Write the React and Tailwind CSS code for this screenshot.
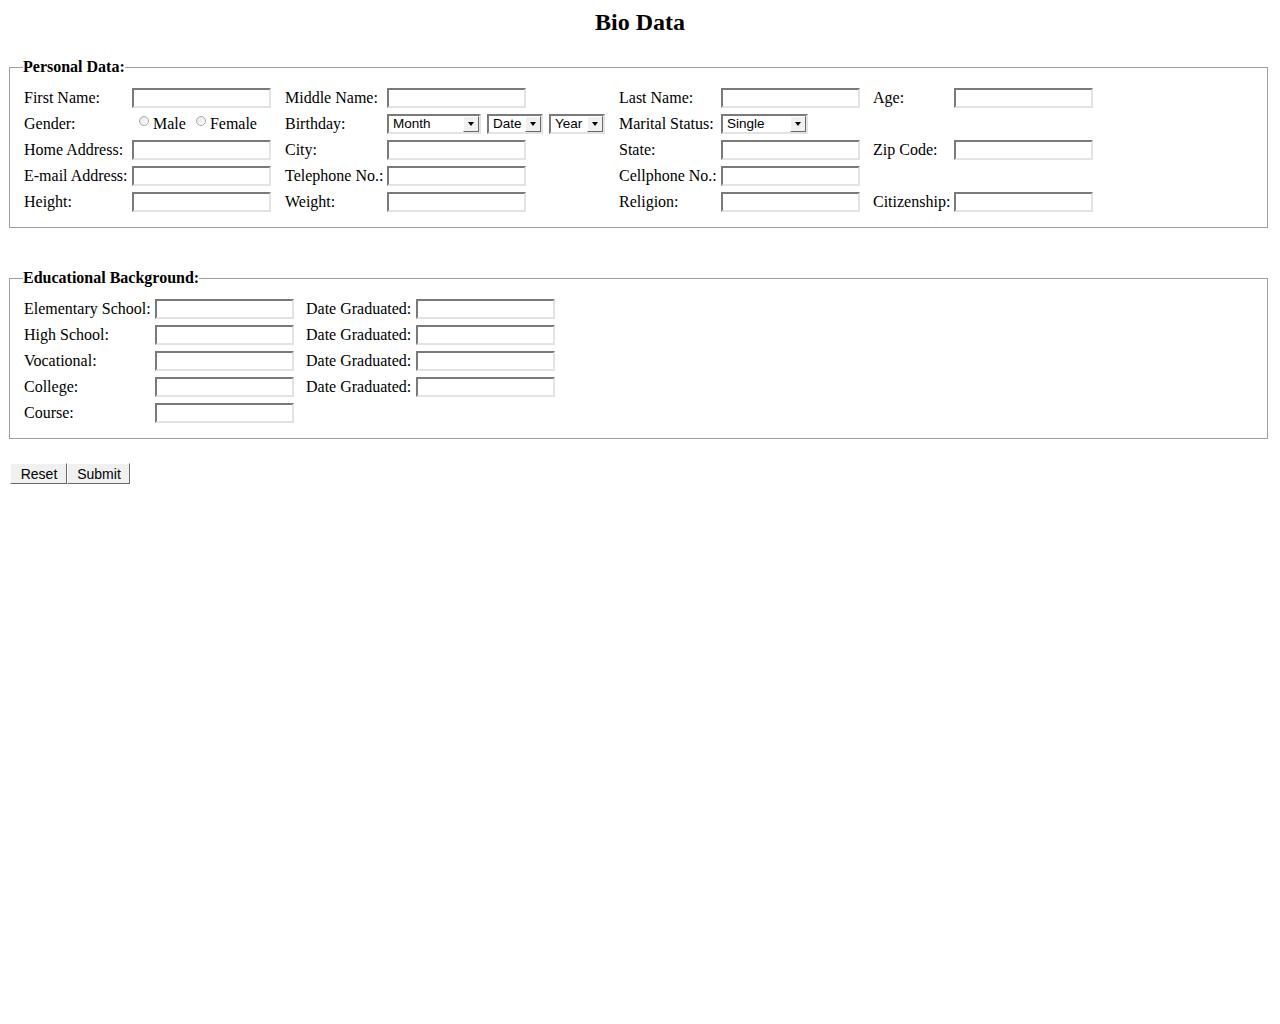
import React from "react";

const serif = { fontFamily: '"Liberation Serif", "Times New Roman", serif' };

// classic inset text box
const boxCls =
  "block w-[139px] h-[20px] bg-white border-2 border-t-[#7a7a7a] border-l-[#7a7a7a] border-b-[#e3e3e3] border-r-[#e3e3e3] outline-none px-1 text-[13px]";

const TextBox = ({ name }) => <input type="text" name={name} className={boxCls} />;

const Select = ({ width, options }) => (
  <div
    className={`${width} h-[20px] flex items-stretch bg-white border-2 border-t-[#7a7a7a] border-l-[#7a7a7a] border-b-[#e3e3e3] border-r-[#e3e3e3]`}
  >
    <select
      className="flex-1 min-w-0 appearance-none bg-white outline-none pl-[4px] text-[13.5px] leading-[16px] text-[#000]"
      style={{ fontFamily: '"Liberation Sans", Arial, sans-serif' }}
    >
      {options.map((o) => (
        <option key={o}>{o}</option>
      ))}
    </select>
    <div className="w-[16px] bg-[#f0f0f0] border border-t-white border-l-white border-b-[#696969] border-r-[#696969] flex items-center justify-center">
      <div className="w-0 h-0 border-l-[3.5px] border-r-[3.5px] border-t-[4px] border-l-transparent border-r-transparent border-t-black" />
    </div>
  </div>
);

const Radio = () => (
  <span className="inline-block w-[10px] h-[10px] rounded-full border border-[#a9a9a9] bg-gradient-to-br from-[#e6e6e6] to-white mr-[4px] -translate-y-[3px]" />
);

const App = () => {
  return (
    <div className="min-h-screen bg-white text-black text-[16px]" style={serif}>
      <h2 className="text-[24px] font-bold text-center leading-[28px] pt-[8px]">Bio Data</h2>

      <form onSubmit={(e) => e.preventDefault()} className="ml-[9px] mr-[12px]">
        {/* Personal Data */}
        <fieldset className="mt-[22px] border border-[#a0a0a0] pl-[14px] pt-[9px] pb-[12px]">
          <legend className="font-bold ml-[-1px] px-0 leading-[18px]">Personal Data:</legend>
          <div className="grid grid-cols-[108px_153px_102px_232px_102px_152px_81px_139px] auto-rows-[26px] items-center">
            <span>First Name:</span>
            <TextBox name="fname" />
            <span>Middle Name:</span>
            <TextBox name="mname" />
            <span>Last Name:</span>
            <TextBox name="lname" />
            <span>Age:</span>
            <TextBox name="age" />

            <span>Gender:</span>
            <div className="flex items-center pl-[7px]">
              <Radio />
              <span className="mr-[10px]">Male</span>
              <Radio />
              <span>Female</span>
            </div>
            <span>Birthday:</span>
            <div className="flex gap-[6px]">
              <Select width="w-[94px]" options={["Month", "January", "February", "March"]} />
              <Select width="w-[56px]" options={["Date", "1", "2", "3"]} />
              <Select width="w-[56px]" options={["Year", "2000", "2001"]} />
            </div>
            <span>Marital Status:</span>
            <Select width="w-[87px]" options={["Single", "Married", "Widowed"]} />
            <span />
            <span />

            <span>Home Address:</span>
            <TextBox name="address" />
            <span>City:</span>
            <TextBox name="city" />
            <span>State:</span>
            <TextBox name="state" />
            <span>Zip Code:</span>
            <TextBox name="zip" />

            <span className="whitespace-nowrap">E-mail Address:</span>
            <TextBox name="email" />
            <span className="whitespace-nowrap">Telephone No.:</span>
            <TextBox name="tel" />
            <span className="whitespace-nowrap">Cellphone No.:</span>
            <TextBox name="cell" />
            <span />
            <span />

            <span>Height:</span>
            <TextBox name="height" />
            <span>Weight:</span>
            <TextBox name="weight" />
            <span>Religion:</span>
            <TextBox name="religion" />
            <span>Citizenship:</span>
            <TextBox name="citizenship" />
          </div>
        </fieldset>

        {/* Educational Background */}
        <fieldset className="mt-[41px] border border-[#a0a0a0] pl-[14px] pt-[9px] pb-[12px]">
          <legend className="font-bold ml-[-1px] px-0 leading-[18px]">Educational Background:</legend>
          <div className="grid grid-cols-[131px_151px_110px_139px] auto-rows-[26px] items-center">
            <span className="whitespace-nowrap">Elementary School:</span>
            <TextBox name="elem" />
            <span className="whitespace-nowrap">Date Graduated:</span>
            <TextBox name="elemdate" />

            <span>High School:</span>
            <TextBox name="hs" />
            <span className="whitespace-nowrap">Date Graduated:</span>
            <TextBox name="hsdate" />

            <span>Vocational:</span>
            <TextBox name="voc" />
            <span className="whitespace-nowrap">Date Graduated:</span>
            <TextBox name="vocdate" />

            <span>College:</span>
            <TextBox name="college" />
            <span className="whitespace-nowrap">Date Graduated:</span>
            <TextBox name="collegedate" />

            <span>Course:</span>
            <TextBox name="course" />
          </div>
        </fieldset>

        <div className="flex mt-[24px] ml-[1px]" style={{ fontFamily: '"Liberation Sans", Arial, sans-serif' }}>
          <button
            type="reset"
            className="w-[57px] h-[21px] text-[14px] leading-[14px] pl-[1px] bg-[#f0f0f0] border border-t-white border-l-white border-b-[#696969] border-r-[#696969]"
          >
            Reset
          </button>
          <button
            type="submit"
            className="w-[63px] h-[21px] text-[14px] leading-[14px] pl-[1px] bg-[#f0f0f0] border border-t-white border-l-white border-b-[#696969] border-r-[#696969]"
          >
            Submit
          </button>
        </div>
      </form>
    </div>
  );
};

export default App;
